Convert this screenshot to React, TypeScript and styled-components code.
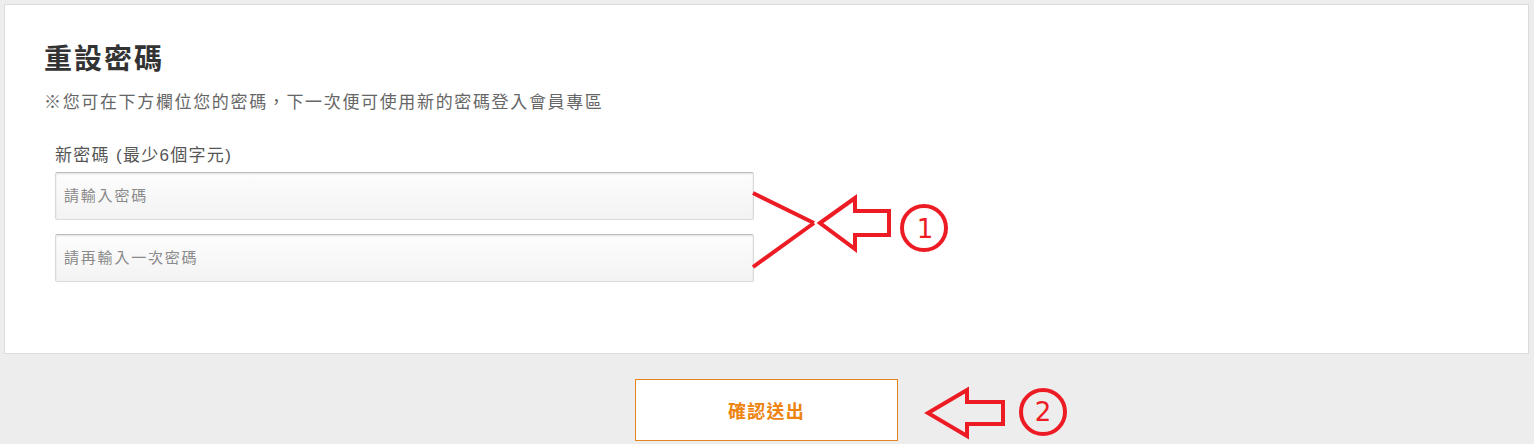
import React from "react";
import styled, { createGlobalStyle } from "styled-components";

const Global = createGlobalStyle`
  html, body { margin: 0; padding: 0; background: #ededed; }
  body { font-family: "Liberation Sans", "Noto Sans CJK TC", sans-serif; }
  * { box-sizing: border-box; }
`;

const Page = styled.div`
  position: relative;
  width: 1534px;
  height: 444px;
  padding: 4px 5px 0 4px;
  background: #ededed;
  overflow: hidden;
`;

const Panel = styled.section`
  background: #fff;
  border: 1px solid #dcdcdc;
  height: 350px;
  padding: 35px 39px 0 39px;
`;

const Title = styled.h1`
  margin: 0;
  font-family: "Noto Sans CJK TC", sans-serif;
  font-size: 28px;
  font-weight: 700;
  line-height: 34px;
  letter-spacing: 2px;
  color: #333;
`;

const Note = styled.p`
  margin: 14px 0 0 0;
  font-family: "Noto Sans CJK TC", sans-serif;
  font-size: 17px;
  line-height: 26px;
  letter-spacing: 1.65px;
  color: #666;
`;

const Group = styled.div`
  margin: 29px 0 0 11px;
  display: flex;
  flex-direction: column;
  gap: 14px;
  width: 699px;
`;

const Label = styled.label`
  display: block;
  font-family: "Liberation Sans", "Noto Sans CJK TC", sans-serif;
  font-size: 17px;
  line-height: 26px;
  letter-spacing: 1.3px;
  color: #555;
  margin-bottom: -11px;
`;

const Field = styled.input`
  display: block;
  width: 699px;
  height: 48px;
  padding: 0 8px 3px;
  border: 1px solid #dadada;
  border-top-color: #bdbdbd;
  border-radius: 2px;
  background: linear-gradient(to bottom, #fdfdfd 0%, #f3f3f3 100%);
  box-shadow: inset 0 1px 2px rgba(0, 0, 0, 0.12);
  font-family: "Noto Sans CJK TC", sans-serif;
  font-size: 15px;
  letter-spacing: 1.8px;
  color: #333;
  outline: none;
  &::placeholder { color: #8a8a8a; }
`;

const Actions = styled.div`
  display: flex;
  justify-content: center;
  padding-top: 25px;
`;

const Submit = styled.button`
  width: 263px;
  height: 62px;
  background: #fff;
  border: 1px solid #e3861f;
  font-family: "Noto Sans CJK TC", sans-serif;
  font-size: 18px;
  font-weight: 700;
  letter-spacing: 1.3px;
  color: #ee8410;
  cursor: pointer;
`;

const Overlay = styled.svg`
  position: absolute;
  left: 0;
  top: 0;
  pointer-events: none;
`;

const RED = "#ed1c24";

export default function App() {
  return (
    <>
      <Global />
      <Page>
        <Panel>
          <Title>重設密碼</Title>
          <Note>※您可在下方欄位您的密碼，下一次便可使用新的密碼登入會員專區</Note>
          <Group>
            <Label>新密碼 (最少6個字元)</Label>
            <Field type="password" placeholder="請輸入密碼" />
            <Field type="password" placeholder="請再輸入一次密碼" />
          </Group>
        </Panel>
        <Actions>
          <Submit type="button">確認送出</Submit>
        </Actions>
        <Overlay width="1534" height="444" viewBox="0 0 1534 444">
          <g fill="none" stroke={RED} strokeWidth="4" strokeLinejoin="miter">
            <line x1="753" y1="193" x2="814" y2="223" />
            <line x1="753" y1="267" x2="814" y2="223" />
            <polygon points="820,223 855,198 855,211 889,211 889,235 855,235 855,249" />
            <circle cx="924" cy="228" r="22" />
            <polygon points="928,413 967,390 967,402 1003,402 1003,424 967,424 967,436" />
            <circle cx="1043" cy="412" r="22" />
          </g>
          <g fill={RED} fontFamily="DejaVu Sans, sans-serif" fontSize="26" textAnchor="middle">
            <text x="925" y="238">1</text>
            <text x="1043" y="421">2</text>
          </g>
        </Overlay>
      </Page>
    </>
  );
}
